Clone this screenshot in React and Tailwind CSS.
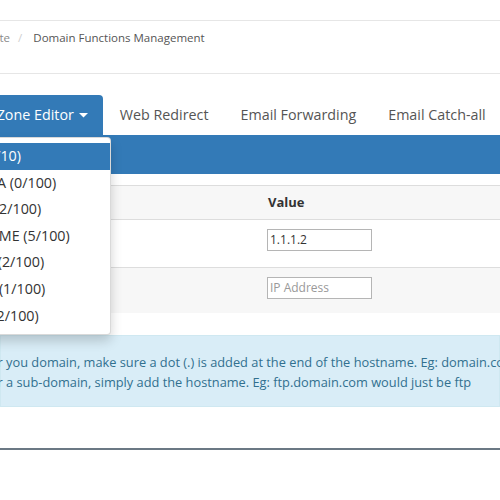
export default function App() {
  const items = [
    { t: "A (5/10)", active: true },
    { t: "AAAA (0/100)" },
    { t: "MX (2/100)" },
    { t: "CNAME (5/100)" },
    { t: "TXT (2/100)" },
    { t: "SRV (1/100)" },
    { t: "NS (2/100)" },
  ];
  return (
    <div className="w-[500px] h-[500px] overflow-hidden bg-white font-['Open_Sans',sans-serif] text-[#333]">
      <div className="h-5" />
      {/* breadcrumb */}
      <div className="h-[54px] border-t border-b border-[#e6e6e6] pt-[8px]">
        <div className="flex items-center -ml-[33px] text-[11.5px] leading-[17px] whitespace-nowrap">
          <span className="text-[#8a8a8a]">Website</span>
          <span className="text-[#cfcfcf] ml-[8px] mr-[11px]">/</span>
          <span className="text-[#555]">Domain Functions Management</span>
        </div>
      </div>
      {/* tabs */}
      <div className="pt-[21px]">
        <div className="flex gap-[2px] -ml-[51px] text-[14.3px] leading-[20px] whitespace-nowrap">
          <div className="relative">
            <div className="flex items-center px-[15px] py-[10px] bg-[#337ab7] text-white rounded-t-[4px]">
              DNS Zone Editor
              <svg className="ml-[5px]" width="9" height="5" viewBox="0 0 9 5"><path d="M0 0 L9 0 L4.5 4.5 Z" fill="white" /></svg>
            </div>
            <div className="absolute left-0 top-[calc(100%+2px)] z-10 w-[162px] py-[5px] bg-white border border-[rgba(0,0,0,0.15)] rounded-[4px] shadow-[0_6px_12px_rgba(0,0,0,0.175)]">
              {items.map((it) => (
                <div
                  key={it.t}
                  className={
                    it.active
                      ? "px-[20px] py-[3px] leading-[20.6px] bg-[#337ab7] text-white"
                      : "px-[20px] py-[3px] leading-[20.6px] text-[#333]"
                  }
                >
                  {it.t}
                </div>
              ))}
            </div>
          </div>
          <div className="px-[15px] py-[10px] text-[#555]">Web Redirect</div>
          <div className="px-[15px] py-[10px] text-[#555]">Email Forwarding</div>
          <div className="px-[15px] py-[10px] text-[#555]">Email Catch-all</div>
        </div>
      </div>
      {/* panel heading */}
      <div className="h-[39px] bg-[#337ab7]" />
      {/* table */}
      <div className="pt-[11px] text-[13px]">
        <div className="grid grid-cols-[260px_1fr] border-t border-[#dddddd] bg-[#f7f7f7] h-[34px] items-center">
          <div />
          <div className="pl-[8px] font-bold">Value</div>
        </div>
        <div className="grid grid-cols-[260px_1fr] border-t border-[#dddddd] bg-white h-[48px] pt-[9px]">
          <div />
          <div className="pl-[7px]">
            <div className="w-[105px] h-[22px] border border-[#b5b5b5] flex items-center px-[2px] text-[12px] text-[#333]">1.1.1.2</div>
          </div>
        </div>
        <div className="grid grid-cols-[260px_1fr] border-t border-[#dddddd] bg-[#f7f7f7] h-[46px] pt-[9px]">
          <div />
          <div className="pl-[7px]">
            <div className="w-[105px] h-[22px] border border-[#b5b5b5] bg-white flex items-center px-[2px] text-[12px] text-[#999]">IP Address</div>
          </div>
        </div>
      </div>
      {/* alert */}
      <div className="mt-[22px] h-[72px] bg-[#d9edf7] border border-[#cfe8f1] text-[#31708f] text-[12.8px] leading-[20px] pt-[16px] whitespace-nowrap">
        <div className="-ml-[172px]">If you are adding a record for you domain, make sure a dot (.) is added at the end of the hostname. Eg: domain.com.</div>
        <div className="-ml-[172px]">If you are adding a record for a sub-domain, simply add the hostname. Eg: ftp.domain.com would just be ftp</div>
      </div>
      <div className="mt-[41px] h-[2px] bg-[#6b7884]" />
    </div>
  );
}
